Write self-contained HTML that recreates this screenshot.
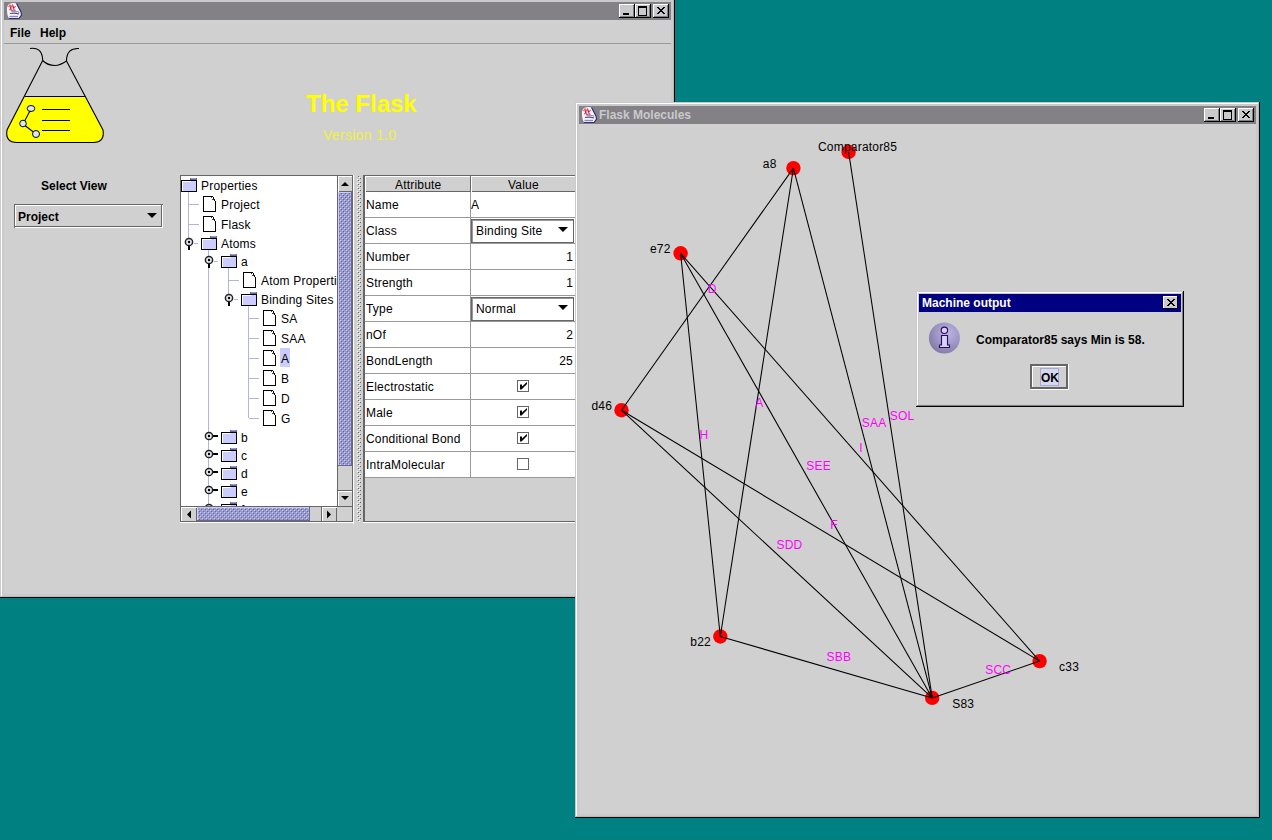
<!DOCTYPE html>
<html><head><meta charset="utf-8"><style>
html,body{margin:0;padding:0}
body{width:1272px;height:840px;overflow:hidden;position:relative;background:#008080;font-family:"Liberation Sans",sans-serif;font-size:12px;color:#000}
.a{position:absolute}
.win{background:#cac9cc;box-shadow:inset -1px -1px #000,inset 1px 1px #cac9cc,inset -2px -2px #b8b8bc,inset 2px 2px #fff}
.cap{background:#808080}
.cb{position:absolute;width:16px;height:14px;background:#cac9cc;box-shadow:inset -1px -1px #000,inset 1px 1px #fff,inset -2px -2px #808080}
.b{font-weight:bold}
.t{position:absolute;white-space:nowrap;line-height:14px;letter-spacing:0.2px}
.b{letter-spacing:0}
.clip{position:absolute;overflow:hidden}
svg{position:absolute;left:0;top:0;overflow:visible}
</style></head><body>
<div class="a win" style="left:0px;top:-2px;width:675px;height:600px;"></div>
<div class="a" style="left:4px;top:2px;width:667px;height:18px;background:#838185"></div>
<div class="cb" style="left:619px;top:4px"><div class="a" style="left:4px;top:9px;width:6px;height:2px;background:#000"></div></div>
<div class="cb" style="left:635px;top:4px"><div class="a" style="left:3px;top:2px;width:7px;height:7px;border:1px solid #000;border-top-width:2px"></div></div>
<div class="cb" style="left:653px;top:4px"><svg width="16" height="14" style="shape-rendering:crispEdges"><path d="M4,3 L11,10 M5,3 L12,10 M11,3 L4,10 M12,3 L5,10" stroke="#000" stroke-width="1"/></svg></div>
<svg width="1272" height="840"><g transform="translate(6,3)">
<path d="M1,8 Q0.5,3 3,1 Q7,-0.5 10.5,0.5 L15,9 L15.5,12 L13,15.5 L3,15.5 Q1,13 1,8 Z" fill="#f8f4fc"/>
<path d="M10.5,0.5 L15,9 L15.5,12 L13,15.5 L3,15.5" fill="none" stroke="#30306e" stroke-width="1.2"/>
<path d="M2.5,4 L4,2 L5,4.5 L6.5,2 L8,5 L9.5,3 M3,7 L5,6 L6,8 L8,6.5 L9.5,8" fill="none" stroke="#e85060" stroke-width="1.2"/>
<path d="M4,4 L5,6 M7,3.5 L7.5,5.5" stroke="#a01830" stroke-width="1"/>
<path d="M4,10.5 Q9,9.5 13,11" fill="none" stroke="#4848a0" stroke-width="1.2"/>
<path d="M6,8.5 L12,8.5 L13,10" fill="none" stroke="#9898d0" stroke-width="1.2"/>
<path d="M3.5,13.5 H12" stroke="#8888c8" stroke-width="1.4"/>
</g></svg>
<div class="a" style="left:4px;top:20px;width:667px;height:574px;background:#d0d0d0"></div>
<div class="a" style="left:4px;top:43px;width:667px;height:1px;background:#999"></div>
<div class="t b" style="left:10px;top:26px;">File</div>
<div class="t b" style="left:40px;top:26px;">Help</div>
<div class="t b" style="left:306px;top:90px;font-size:24px;line-height:28px;color:#ffff00">The Flask</div>
<div class="t " style="left:323px;top:126px;font-size:14px;line-height:18px;color:#f0f040;letter-spacing:0.3px">Version 1.0</div>
<div class="t b" style="left:41px;top:179px;">Select View</div>
<svg width="1272" height="840">
<path d="M25,96.5 L85,96.5 L103,130 Q105,142 93,142 L17,142 Q5,142 7,130 Z" fill="#ffff00"/>
<g fill="none" stroke="#000" stroke-width="1.1">
<path d="M30,48.5 C37,47.5 42.5,50 42.7,60.5"/>
<path d="M42.7,60.5 C47,65 51,65.5 55,65.5 C59,65.5 62,64 66.5,61"/>
<path d="M66.5,61 C66.5,52 71,48 79,48.5"/>
<path d="M42.7,60.5 L7,130 Q5,142.5 17,142.5 L93,142.5 Q105,142.5 103,130 L66.5,61"/>
<path d="M25,96.5 L85,96.5"/>
<path d="M42,109.5 H70 M42,120.5 H70 M42,130.5 H70"/>
<path d="M31,109 L23,124 L36,134"/>
</g>
<g fill="#d8e8ff" stroke="#000" stroke-width="1">
<ellipse cx="31" cy="108.5" rx="3.8" ry="3"/>
<circle cx="23" cy="123.5" r="3.3"/>
<circle cx="36" cy="134" r="3.5"/>
</g>
</svg>
<div class="a" style="left:14px;top:204px;width:149px;height:24px;background:#d0d0d0;box-shadow:inset 1px 1px #666,inset -1px -1px #fff,inset 2px 2px #fff"></div>
<div class="a" style="left:14px;top:204px;width:148px;height:23px;border-right:1px solid #666;border-bottom:1px solid #666;box-sizing:border-box"></div>
<div class="t b" style="left:18px;top:210px;">Project</div>
<svg width="1272" height="840"><path d="M147,213 L157,213 L152,218 Z" fill="#000"/></svg>
<div class="a" style="left:180px;top:175px;width:174px;height:348px;background:#fff"></div>
<div class="clip" style="left:181px;top:176px;width:156px;height:330px"><div class="a" style="left:-181px;top:-176px;width:1272px;height:840px">
<svg width="1272" height="840" style="shape-rendering:crispEdges"><rect x="188" y="192" width="1" height="46" fill="#b4b4dc"/><rect x="189" y="204" width="10" height="1" fill="#b4b4dc"/><rect x="189" y="224" width="10" height="1" fill="#b4b4dc"/><rect x="208" y="250" width="1" height="256" fill="#b4b4dc"/><rect x="228" y="268" width="1" height="27" fill="#b4b4dc"/><rect x="229" y="280" width="10" height="1" fill="#b4b4dc"/><rect x="248" y="306" width="1" height="112" fill="#b4b4dc"/><rect x="249" y="318" width="10" height="1" fill="#b4b4dc"/><rect x="249" y="338" width="10" height="1" fill="#b4b4dc"/><rect x="249" y="358" width="10" height="1" fill="#b4b4dc"/><rect x="249" y="378" width="10" height="1" fill="#b4b4dc"/><rect x="249" y="398" width="10" height="1" fill="#b4b4dc"/><rect x="249" y="418" width="10" height="1" fill="#b4b4dc"/><g transform="translate(181,178)"><rect x="9" y="0" width="7" height="3" fill="#666699"/><rect x="10" y="0" width="5" height="1" fill="#9999cc"/><rect x="0.5" y="2.5" width="15" height="11" fill="#ccccff" stroke="#000"/><rect x="1" y="3" width="9" height="1" fill="#fff"/><rect x="1" y="3" width="1" height="10" fill="#fff"/></g><g transform="translate(203,196)"><path d="M0.5,0.5 H9.5 L12.5,5.5 V15.5 H0.5 Z" fill="#fff" stroke="#000"/><path d="M8.5,1.5 L11.5,5.5" fill="none" stroke="#444" stroke-width="1" stroke-dasharray="1,1"/></g><g transform="translate(203,216)"><path d="M0.5,0.5 H9.5 L12.5,5.5 V15.5 H0.5 Z" fill="#fff" stroke="#000"/><path d="M8.5,1.5 L11.5,5.5" fill="none" stroke="#444" stroke-width="1" stroke-dasharray="1,1"/></g><g transform="translate(201,236)"><rect x="9" y="0" width="7" height="3" fill="#666699"/><rect x="10" y="0" width="5" height="1" fill="#9999cc"/><rect x="0.5" y="2.5" width="15" height="11" fill="#ccccff" stroke="#000"/><rect x="1" y="3" width="9" height="1" fill="#fff"/><rect x="1" y="3" width="1" height="10" fill="#fff"/></g><rect x="188" y="244" width="2" height="6" fill="#000"/><rect x="194" y="243" width="4" height="1" fill="#b4b4dc"/><g shape-rendering="geometricPrecision"><circle cx="189" cy="242" r="3.6" fill="#ececf8" stroke="#222" stroke-width="1.5"/><circle cx="189" cy="242" r="1.2" fill="#000"/></g><g transform="translate(221,254)"><rect x="9" y="0" width="7" height="3" fill="#666699"/><rect x="10" y="0" width="5" height="1" fill="#9999cc"/><rect x="0.5" y="2.5" width="15" height="11" fill="#ccccff" stroke="#000"/><rect x="1" y="3" width="9" height="1" fill="#fff"/><rect x="1" y="3" width="1" height="10" fill="#fff"/></g><rect x="208" y="262" width="2" height="6" fill="#000"/><rect x="214" y="261" width="4" height="1" fill="#b4b4dc"/><g shape-rendering="geometricPrecision"><circle cx="209" cy="260" r="3.6" fill="#ececf8" stroke="#222" stroke-width="1.5"/><circle cx="209" cy="260" r="1.2" fill="#000"/></g><g transform="translate(243,272)"><path d="M0.5,0.5 H9.5 L12.5,5.5 V15.5 H0.5 Z" fill="#fff" stroke="#000"/><path d="M8.5,1.5 L11.5,5.5" fill="none" stroke="#444" stroke-width="1" stroke-dasharray="1,1"/></g><g transform="translate(241,292)"><rect x="9" y="0" width="7" height="3" fill="#666699"/><rect x="10" y="0" width="5" height="1" fill="#9999cc"/><rect x="0.5" y="2.5" width="15" height="11" fill="#ccccff" stroke="#000"/><rect x="1" y="3" width="9" height="1" fill="#fff"/><rect x="1" y="3" width="1" height="10" fill="#fff"/></g><rect x="228" y="300" width="2" height="6" fill="#000"/><rect x="234" y="299" width="4" height="1" fill="#b4b4dc"/><g shape-rendering="geometricPrecision"><circle cx="229" cy="298" r="3.6" fill="#ececf8" stroke="#222" stroke-width="1.5"/><circle cx="229" cy="298" r="1.2" fill="#000"/></g><g transform="translate(263,310)"><path d="M0.5,0.5 H9.5 L12.5,5.5 V15.5 H0.5 Z" fill="#fff" stroke="#000"/><path d="M8.5,1.5 L11.5,5.5" fill="none" stroke="#444" stroke-width="1" stroke-dasharray="1,1"/></g><g transform="translate(263,330)"><path d="M0.5,0.5 H9.5 L12.5,5.5 V15.5 H0.5 Z" fill="#fff" stroke="#000"/><path d="M8.5,1.5 L11.5,5.5" fill="none" stroke="#444" stroke-width="1" stroke-dasharray="1,1"/></g><g transform="translate(263,350)"><path d="M0.5,0.5 H9.5 L12.5,5.5 V15.5 H0.5 Z" fill="#fff" stroke="#000"/><path d="M8.5,1.5 L11.5,5.5" fill="none" stroke="#444" stroke-width="1" stroke-dasharray="1,1"/></g><g transform="translate(263,370)"><path d="M0.5,0.5 H9.5 L12.5,5.5 V15.5 H0.5 Z" fill="#fff" stroke="#000"/><path d="M8.5,1.5 L11.5,5.5" fill="none" stroke="#444" stroke-width="1" stroke-dasharray="1,1"/></g><g transform="translate(263,390)"><path d="M0.5,0.5 H9.5 L12.5,5.5 V15.5 H0.5 Z" fill="#fff" stroke="#000"/><path d="M8.5,1.5 L11.5,5.5" fill="none" stroke="#444" stroke-width="1" stroke-dasharray="1,1"/></g><g transform="translate(263,410)"><path d="M0.5,0.5 H9.5 L12.5,5.5 V15.5 H0.5 Z" fill="#fff" stroke="#000"/><path d="M8.5,1.5 L11.5,5.5" fill="none" stroke="#444" stroke-width="1" stroke-dasharray="1,1"/></g><g transform="translate(221,430)"><rect x="9" y="0" width="7" height="3" fill="#666699"/><rect x="10" y="0" width="5" height="1" fill="#9999cc"/><rect x="0.5" y="2.5" width="15" height="11" fill="#ccccff" stroke="#000"/><rect x="1" y="3" width="9" height="1" fill="#fff"/><rect x="1" y="3" width="1" height="10" fill="#fff"/></g><rect x="211" y="435" width="7" height="2" fill="#000"/><g shape-rendering="geometricPrecision"><circle cx="209" cy="436" r="3.6" fill="#ececf8" stroke="#222" stroke-width="1.5"/><circle cx="209" cy="436" r="1.2" fill="#000"/></g><g transform="translate(221,448)"><rect x="9" y="0" width="7" height="3" fill="#666699"/><rect x="10" y="0" width="5" height="1" fill="#9999cc"/><rect x="0.5" y="2.5" width="15" height="11" fill="#ccccff" stroke="#000"/><rect x="1" y="3" width="9" height="1" fill="#fff"/><rect x="1" y="3" width="1" height="10" fill="#fff"/></g><rect x="211" y="453" width="7" height="2" fill="#000"/><g shape-rendering="geometricPrecision"><circle cx="209" cy="454" r="3.6" fill="#ececf8" stroke="#222" stroke-width="1.5"/><circle cx="209" cy="454" r="1.2" fill="#000"/></g><g transform="translate(221,466)"><rect x="9" y="0" width="7" height="3" fill="#666699"/><rect x="10" y="0" width="5" height="1" fill="#9999cc"/><rect x="0.5" y="2.5" width="15" height="11" fill="#ccccff" stroke="#000"/><rect x="1" y="3" width="9" height="1" fill="#fff"/><rect x="1" y="3" width="1" height="10" fill="#fff"/></g><rect x="211" y="471" width="7" height="2" fill="#000"/><g shape-rendering="geometricPrecision"><circle cx="209" cy="472" r="3.6" fill="#ececf8" stroke="#222" stroke-width="1.5"/><circle cx="209" cy="472" r="1.2" fill="#000"/></g><g transform="translate(221,484)"><rect x="9" y="0" width="7" height="3" fill="#666699"/><rect x="10" y="0" width="5" height="1" fill="#9999cc"/><rect x="0.5" y="2.5" width="15" height="11" fill="#ccccff" stroke="#000"/><rect x="1" y="3" width="9" height="1" fill="#fff"/><rect x="1" y="3" width="1" height="10" fill="#fff"/></g><rect x="211" y="489" width="7" height="2" fill="#000"/><g shape-rendering="geometricPrecision"><circle cx="209" cy="490" r="3.6" fill="#ececf8" stroke="#222" stroke-width="1.5"/><circle cx="209" cy="490" r="1.2" fill="#000"/></g><g transform="translate(221,502)"><rect x="9" y="0" width="7" height="3" fill="#666699"/><rect x="10" y="0" width="5" height="1" fill="#9999cc"/><rect x="0.5" y="2.5" width="15" height="11" fill="#ccccff" stroke="#000"/><rect x="1" y="3" width="9" height="1" fill="#fff"/><rect x="1" y="3" width="1" height="10" fill="#fff"/></g><rect x="211" y="507" width="7" height="2" fill="#000"/><g shape-rendering="geometricPrecision"><circle cx="209" cy="508" r="3.6" fill="#ececf8" stroke="#222" stroke-width="1.5"/><circle cx="209" cy="508" r="1.2" fill="#000"/></g></svg>
<div class="t" style="left:201px;top:179px">Properties</div><div class="t" style="left:221px;top:198px">Project</div><div class="t" style="left:221px;top:218px">Flask</div><div class="t" style="left:221px;top:237px">Atoms</div><div class="t" style="left:241px;top:255px">a</div><div class="t" style="left:261px;top:274px">Atom Properties</div><div class="t" style="left:261px;top:293px">Binding Sites</div><div class="t" style="left:281px;top:312px">SA</div><div class="t" style="left:281px;top:332px">SAA</div><div class="a" style="left:280px;top:348px;width:10px;height:19px;background:#ccccff"></div><div class="t" style="left:281px;top:352px">A</div><div class="t" style="left:281px;top:372px">B</div><div class="t" style="left:281px;top:392px">D</div><div class="t" style="left:281px;top:412px">G</div><div class="t" style="left:241px;top:431px">b</div><div class="t" style="left:241px;top:449px">c</div><div class="t" style="left:241px;top:467px">d</div><div class="t" style="left:241px;top:485px">e</div><div class="t" style="left:241px;top:503px">f</div>
</div></div>
<svg width="0" height="0"><defs>
<pattern id="bump" width="4" height="4" patternUnits="userSpaceOnUse">
<rect width="4" height="4" fill="#9999cc"/><rect x="0" y="0" width="1" height="1" fill="#ccccff"/><rect x="2" y="2" width="1" height="1" fill="#ccccff"/>
<rect x="1" y="1" width="1" height="1" fill="#666699"/><rect x="3" y="3" width="1" height="1" fill="#666699"/></pattern>
<pattern id="gbump" width="4" height="4" patternUnits="userSpaceOnUse">
<rect width="4" height="4" fill="#d0d0d0"/><rect x="0" y="0" width="1" height="1" fill="#fff"/><rect x="2" y="2" width="1" height="1" fill="#fff"/>
<rect x="1" y="1" width="1" height="1" fill="#808080"/><rect x="3" y="3" width="1" height="1" fill="#808080"/></pattern>
</defs></svg>
<div class="a" style="left:337px;top:176px;width:15px;height:330px;background:#d0d0d0"></div>
<div class="a" style="left:337px;top:176px;width:1px;height:330px;background:#666"></div>
<div class="a" style="left:338px;top:176px;width:14px;height:16px;background:#d0d0d0;box-shadow:inset 1px 1px #fff,inset 0 -1px #666"></div>
<svg width="1272" height="840"><path d="M341.0,186.0 L349.0,186.0 L345.0,182.0 Z" fill="#000"/></svg>
<svg width="1272" height="840" style="shape-rendering:crispEdges"><rect x="338" y="192" width="14" height="274" fill="url(#bump)"/><rect x="338" y="192" width="14" height="1" fill="#ccccff"/><rect x="338" y="192" width="1" height="274" fill="#ccccff"/><rect x="338" y="465" width="14" height="1" fill="#666699"/><rect x="351" y="192" width="1" height="274" fill="#666699"/></svg>
<div class="a" style="left:338px;top:490px;width:14px;height:16px;background:#d0d0d0;box-shadow:inset 0 1px #666,inset 1px 2px #fff"></div>
<svg width="1272" height="840"><path d="M341.0,496.0 L349.0,496.0 L345.0,500.0 Z" fill="#000"/></svg>
<div class="a" style="left:181px;top:506px;width:156px;height:16px;background:#d0d0d0"></div>
<div class="a" style="left:181px;top:506px;width:171px;height:1px;background:#666"></div>
<div class="a" style="left:181px;top:507px;width:16px;height:15px;background:#d0d0d0;box-shadow:inset 1px 1px #fff,inset -1px 0 #666"></div>
<svg width="1272" height="840"><path d="M191.0,510.5 L191.0,518.5 L187.0,514.5 Z" fill="#000"/></svg>
<svg width="1272" height="840" style="shape-rendering:crispEdges"><rect x="197" y="507" width="113" height="15" fill="url(#bump)"/><rect x="197" y="507" width="113" height="1" fill="#ccccff"/><rect x="197" y="507" width="1" height="15" fill="#ccccff"/><rect x="197" y="520" width="113" height="1" fill="#666699"/><rect x="309" y="507" width="1" height="14" fill="#666699"/></svg>
<div class="a" style="left:321px;top:507px;width:16px;height:15px;background:#d0d0d0;box-shadow:inset 1px 0 #666,inset 2px 1px #fff,inset -1px 0 #666"></div>
<svg width="1272" height="840"><path d="M327.0,510.5 L327.0,518.5 L331.0,514.5 Z" fill="#000"/></svg>
<div class="a" style="left:337px;top:507px;width:15px;height:14px;background:#d0d0d0"></div>
<div class="a" style="left:180px;top:175px;width:173px;height:347px;border:1px solid #666;box-sizing:border-box"></div>
<div class="a" style="left:353px;top:175px;width:1px;height:349px;background:#fff"></div>
<div class="a" style="left:180px;top:522px;width:174px;height:1px;background:#fff"></div>
<svg width="1272" height="840" style="shape-rendering:crispEdges"><defs><pattern id="spl" x="354" y="176" width="8" height="4" patternUnits="userSpaceOnUse"><rect x="4" y="0" width="1" height="1" fill="#666"/><rect x="6" y="2" width="1" height="1" fill="#666"/><rect x="3" y="3" width="1" height="1" fill="#fff"/><rect x="5" y="1" width="1" height="1" fill="#fff"/></pattern></defs><rect x="354" y="176" width="8" height="346" fill="#d0d0d0"/><rect x="354" y="176" width="8" height="346" fill="url(#spl)"/></svg>
<div class="a" style="left:363px;top:175px;width:215px;height:348px;background:#d0d0d0;border-left:2px solid #666;border-top:1px solid #666;box-sizing:border-box"></div>
<div class="a" style="left:365px;top:176px;width:211px;height:16px;background:#d0d0d0;box-shadow:inset 1px 1px #fff,inset -1px -1px #666"></div>
<div class="a" style="left:470px;top:176px;width:1px;height:16px;background:#666"></div>
<div class="a" style="left:471px;top:176px;width:1px;height:16px;background:#fff"></div>
<div class="t " style="left:395px;top:178px;">Attribute</div>
<div class="t " style="left:508px;top:178px;">Value</div>
<div class="a" style="left:365px;top:192px;width:211px;height:286px;background:#fff"></div>
<div class="a" style="left:365px;top:217px;width:211px;height:1px;background:#999"></div>
<div class="t " style="left:366px;top:198px;">Name</div>
<div class="t " style="left:471px;top:198px;">A</div>
<div class="a" style="left:365px;top:243px;width:211px;height:1px;background:#999"></div>
<div class="t " style="left:366px;top:224px;">Class</div>
<div class="a" style="left:471px;top:219px;width:103px;height:24px;background:#fff;border:1px solid #666;box-sizing:border-box;box-shadow:inset 1px 1px #999"></div>
<div class="t " style="left:476px;top:224px;">Binding Site</div>
<svg width="1272" height="840"><path d="M558,227 L568,227 L563,232 Z" fill="#000"/></svg>
<div class="a" style="left:365px;top:269px;width:211px;height:1px;background:#999"></div>
<div class="t " style="left:366px;top:250px;">Number</div>
<div class="t" style="left:471px;top:250px;width:102px;text-align:right">1</div>
<div class="a" style="left:365px;top:295px;width:211px;height:1px;background:#999"></div>
<div class="t " style="left:366px;top:276px;">Strength</div>
<div class="t" style="left:471px;top:276px;width:102px;text-align:right">1</div>
<div class="a" style="left:365px;top:321px;width:211px;height:1px;background:#999"></div>
<div class="t " style="left:366px;top:302px;">Type</div>
<div class="a" style="left:471px;top:297px;width:103px;height:24px;background:#fff;border:1px solid #666;box-sizing:border-box;box-shadow:inset 1px 1px #999"></div>
<div class="t " style="left:476px;top:302px;">Normal</div>
<svg width="1272" height="840"><path d="M558,305 L568,305 L563,310 Z" fill="#000"/></svg>
<div class="a" style="left:365px;top:347px;width:211px;height:1px;background:#999"></div>
<div class="t " style="left:366px;top:328px;">nOf</div>
<div class="t" style="left:471px;top:328px;width:102px;text-align:right">2</div>
<div class="a" style="left:365px;top:373px;width:211px;height:1px;background:#999"></div>
<div class="t " style="left:366px;top:354px;">BondLength</div>
<div class="t" style="left:471px;top:354px;width:102px;text-align:right">25</div>
<div class="a" style="left:365px;top:399px;width:211px;height:1px;background:#999"></div>
<div class="t " style="left:366px;top:380px;">Electrostatic</div>
<div class="a" style="left:517px;top:380px;width:12px;height:12px;background:#fff;border:1px solid #666;box-sizing:border-box;box-shadow:1px 1px #fff"></div>
<svg width="1272" height="840"><path d="M520,384.5 L522,384.5 L522,386.5 L527,382 L527,384 L521.5,389.5 L520,389.5 Z" fill="#000"/></svg>
<div class="a" style="left:365px;top:425px;width:211px;height:1px;background:#999"></div>
<div class="t " style="left:366px;top:406px;">Male</div>
<div class="a" style="left:517px;top:406px;width:12px;height:12px;background:#fff;border:1px solid #666;box-sizing:border-box;box-shadow:1px 1px #fff"></div>
<svg width="1272" height="840"><path d="M520,410.5 L522,410.5 L522,412.5 L527,408 L527,410 L521.5,415.5 L520,415.5 Z" fill="#000"/></svg>
<div class="a" style="left:365px;top:451px;width:211px;height:1px;background:#999"></div>
<div class="t " style="left:366px;top:432px;">Conditional Bond</div>
<div class="a" style="left:517px;top:432px;width:12px;height:12px;background:#fff;border:1px solid #666;box-sizing:border-box;box-shadow:1px 1px #fff"></div>
<svg width="1272" height="840"><path d="M520,436.5 L522,436.5 L522,438.5 L527,434 L527,436 L521.5,441.5 L520,441.5 Z" fill="#000"/></svg>
<div class="a" style="left:365px;top:477px;width:211px;height:1px;background:#999"></div>
<div class="t " style="left:366px;top:458px;">IntraMolecular</div>
<div class="a" style="left:517px;top:458px;width:12px;height:12px;background:#fff;border:1px solid #666;box-sizing:border-box;box-shadow:1px 1px #fff"></div>
<div class="a" style="left:470px;top:192px;width:1px;height:286px;background:#999"></div>
<div class="a" style="left:363px;top:521px;width:214px;height:1px;background:#666"></div>
<div class="a" style="left:363px;top:522px;width:214px;height:1px;background:#fff"></div>
<div class="a win" style="left:575px;top:102px;width:685px;height:716px"></div>
<div class="a" style="left:579px;top:106px;width:677px;height:18px;background:#838185"></div>
<div class="t b" style="left:599px;top:108px;color:#cac9cc">Flask Molecules</div>
<div class="cb" style="left:1204px;top:108px"><div class="a" style="left:4px;top:9px;width:6px;height:2px;background:#000"></div></div>
<div class="cb" style="left:1220px;top:108px"><div class="a" style="left:3px;top:2px;width:7px;height:7px;border:1px solid #000;border-top-width:2px"></div></div>
<div class="cb" style="left:1238px;top:108px"><svg width="16" height="14" style="shape-rendering:crispEdges"><path d="M4,3 L11,10 M5,3 L12,10 M11,3 L4,10 M12,3 L5,10" stroke="#000" stroke-width="1"/></svg></div>
<svg width="1272" height="840"><g transform="translate(581,107)">
<path d="M1,8 Q0.5,3 3,1 Q7,-0.5 10.5,0.5 L15,9 L15.5,12 L13,15.5 L3,15.5 Q1,13 1,8 Z" fill="#f8f4fc"/>
<path d="M10.5,0.5 L15,9 L15.5,12 L13,15.5 L3,15.5" fill="none" stroke="#30306e" stroke-width="1.2"/>
<path d="M2.5,4 L4,2 L5,4.5 L6.5,2 L8,5 L9.5,3 M3,7 L5,6 L6,8 L8,6.5 L9.5,8" fill="none" stroke="#e85060" stroke-width="1.2"/>
<path d="M4,4 L5,6 M7,3.5 L7.5,5.5" stroke="#a01830" stroke-width="1"/>
<path d="M4,10.5 Q9,9.5 13,11" fill="none" stroke="#4848a0" stroke-width="1.2"/>
<path d="M6,8.5 L12,8.5 L13,10" fill="none" stroke="#9898d0" stroke-width="1.2"/>
<path d="M3.5,13.5 H12" stroke="#8888c8" stroke-width="1.4"/>
</g></svg>
<div class="a" style="left:579px;top:124px;width:677px;height:690px;background:#d0d0d0"></div>
<svg width="1272" height="840"><circle cx="793.4" cy="168.1" r="7.2" fill="#ff0000"/><circle cx="848.6" cy="151.9" r="7.2" fill="#ff0000"/><circle cx="680.6" cy="253.3" r="7.2" fill="#ff0000"/><circle cx="621.5" cy="410.2" r="7.2" fill="#ff0000"/><circle cx="720.3" cy="636.5" r="7.2" fill="#ff0000"/><circle cx="932.2" cy="697.9" r="7.2" fill="#ff0000"/><circle cx="1039.6" cy="661.1" r="7.2" fill="#ff0000"/><g stroke="#000" stroke-width="1.05" fill="none"><line x1="793.4" y1="168.1" x2="621.5" y2="410.2"/><line x1="793.4" y1="168.1" x2="720.3" y2="636.5"/><line x1="793.4" y1="168.1" x2="932.2" y2="697.9"/><line x1="848.6" y1="151.9" x2="932.2" y2="697.9"/><line x1="680.6" y1="253.3" x2="720.3" y2="636.5"/><line x1="680.6" y1="253.3" x2="932.2" y2="697.9"/><line x1="680.6" y1="253.3" x2="1039.6" y2="661.1"/><line x1="621.5" y1="410.2" x2="1039.6" y2="661.1"/><line x1="621.5" y1="410.2" x2="932.2" y2="697.9"/><line x1="720.3" y1="636.5" x2="932.2" y2="697.9"/><line x1="932.2" y1="697.9" x2="1039.6" y2="661.1"/></g><g font-family="Liberation Sans" font-size="12" letter-spacing="0.2"><text x="762.8" y="167.5" fill="#000">a8</text><text x="818.0" y="151.2" fill="#000">Comparator85</text><text x="649.9" y="252.6" fill="#000">e72</text><text x="591.5" y="409.6" fill="#000">d46</text><text x="690.3" y="646.3" fill="#000">b22</text><text x="952.2" y="708.4" fill="#000">S83</text><text x="1059.1" y="670.6" fill="#000">c33</text><text x="707.8" y="292.9" fill="#ff00ff">D</text><text x="755.2" y="407" fill="#ff00ff">A</text><text x="699.6" y="438.5" fill="#ff00ff">H</text><text x="806.3" y="469.6" fill="#ff00ff">SEE</text><text x="861.8" y="427.2" fill="#ff00ff">SAA</text><text x="889.7" y="419.6" fill="#ff00ff">SOL</text><text x="859.3" y="451.5" fill="#ff00ff">I</text><text x="776.5" y="548.6" fill="#ff00ff">SDD</text><text x="830.3" y="529.2" fill="#ff00ff">F</text><text x="826.5" y="661.4" fill="#ff00ff">SBB</text><text x="985.2" y="673.7" fill="#ff00ff">SCC</text></g></svg>
<div class="a" style="left:916px;top:291px;width:268px;height:116px;background:#cac9cc;box-shadow:inset -1px -1px #000,inset 1px 1px #cac9cc,inset -2px -2px #808080,inset 2px 2px #fff"></div>
<div class="a" style="left:919px;top:294px;width:262px;height:18px;background:#000080"></div>
<div class="t b" style="left:922px;top:296px;color:#fff">Machine output</div>
<div class="cb" style="left:1163px;top:296px;width:15px;height:13px;box-shadow:inset -1px -1px #000,inset 1px 1px #fff"><svg width="16" height="14" style="shape-rendering:crispEdges"><path d="M4,3 L11,10 M5,3 L12,10 M11,3 L4,10 M12,3 L5,10" stroke="#000" stroke-width="1"/></svg></div>
<div class="a" style="left:919px;top:312px;width:263px;height:92px;background:#d0d0d0"></div>
<svg width="1272" height="840">
<defs><pattern id="dith" width="2" height="2" patternUnits="userSpaceOnUse"><rect width="2" height="2" fill="#ccccff"/><rect width="1" height="1" fill="#9999cc"/><rect x="1" y="1" width="1" height="1" fill="#9999cc"/></pattern></defs>
<defs><radialGradient id="ig" cx="0.62" cy="0.35" r="0.75"><stop offset="0" stop-color="#bcb4e0"/><stop offset="0.55" stop-color="#9c94c4"/><stop offset="1" stop-color="#7c74a0"/></radialGradient></defs>
<circle cx="944.4" cy="338" r="15.5" fill="url(#ig)"/>
<circle cx="944.4" cy="330.3" r="3.2" fill="#d8d0f8" stroke="#2a0a5a" stroke-width="1.1"/>
<path d="M941.5,335.5 H947.5 V345 H949.5 V347.5 H939.5 V345 H941.5 Z" fill="#d8d0f8" stroke="#2a0a5a" stroke-width="1.1"/>
</svg>
<div class="t b" style="left:976px;top:333px">Comparator85 says Min is 58.</div>
<div class="a" style="left:1030px;top:364px;width:38px;height:25px;background:#d0d0d0;box-shadow:inset 2px 2px #666,inset -2px -2px #666,inset 3px 3px #fff"></div>
<div class="a" style="left:1068px;top:364px;width:1px;height:25px;background:#fff"></div>
<div class="a" style="left:1030px;top:389px;width:39px;height:1px;background:#fff"></div>
<div class="a" style="left:1040px;top:368px;width:19px;height:18px;background:#d8d8ec;box-shadow:inset 0 0 0 1px #a8a8d8"></div>
<div class="t b" style="left:1041px;top:371px">OK</div>
</body></html>
